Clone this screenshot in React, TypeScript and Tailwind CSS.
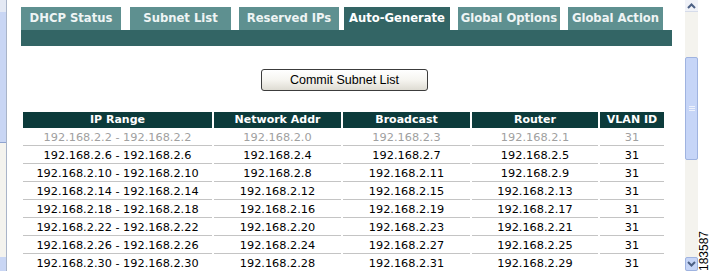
const tabs = [
  { label: "DHCP Status", w: "w-[100px]", mr: "mr-[9px]" },
  { label: "Subnet List", w: "w-[101px]", mr: "mr-[8px]" },
  { label: "Reserved IPs", w: "w-[100px]", mr: "mr-[5px]" },
  { label: "Auto-Generate", w: "w-[106px]", mr: "mr-[8px]", active: true },
  { label: "Global Options", w: "w-[102px]", mr: "mr-[8px]" },
  { label: "Global Action", w: "w-[95px]", mr: "" },
];

const rows = [
  ["192.168.2.2 - 192.168.2.2", "192.168.2.0", "192.168.2.3", "192.168.2.1", "31"],
  ["192.168.2.6 - 192.168.2.6", "192.168.2.4", "192.168.2.7", "192.168.2.5", "31"],
  ["192.168.2.10 - 192.168.2.10", "192.168.2.8", "192.168.2.11", "192.168.2.9", "31"],
  ["192.168.2.14 - 192.168.2.14", "192.168.2.12", "192.168.2.15", "192.168.2.13", "31"],
  ["192.168.2.18 - 192.168.2.18", "192.168.2.16", "192.168.2.19", "192.168.2.17", "31"],
  ["192.168.2.22 - 192.168.2.22", "192.168.2.20", "192.168.2.23", "192.168.2.21", "31"],
  ["192.168.2.26 - 192.168.2.26", "192.168.2.24", "192.168.2.27", "192.168.2.25", "31"],
  ["192.168.2.30 - 192.168.2.30", "192.168.2.28", "192.168.2.31", "192.168.2.29", "31"],
];

const headers = [
  { label: "IP Range", w: "w-[189px]" },
  { label: "Network Addr", w: "w-[127px]" },
  { label: "Broadcast", w: "w-[127px]" },
  { label: "Router", w: "w-[126px]" },
  { label: "VLAN ID", w: "w-[64px]" },
];

function Chevron({ up }: { up?: boolean }) {
  return (
    <svg width="9" height="6" viewBox="0 0 9 6">
      <path
        d={up ? "M1 5 L4.5 1.5 L8 5" : "M1 1 L4.5 4.5 L8 1"}
        fill="none"
        stroke="#4d6185"
        strokeWidth="2"
      />
    </svg>
  );
}

export default function App() {
  return (
    <div className="relative flex h-[271px] w-[711px] overflow-hidden bg-white font-['DejaVu_Sans',sans-serif]">
      {/* left frame scrollbar edge */}
      <div className="flex w-[7px] flex-col border-r border-[#a9b4c8]">
        <div className="h-[12px] bg-[#e4e9f4]" />
        <div className="h-[131px] border-b border-[#8fa3cf] bg-[#c9d6f4]" />
        <div className="flex-1 bg-[#f4f3ee]" />
        <div className="h-[14px] bg-[#c9d6f4]" />
      </div>

      {/* main content */}
      <div className="w-[678px] pl-[14px] pt-[7px]">
        <div className="flex h-[23px] w-[651px] items-stretch">
          {tabs.map((t) => (
            <div
              key={t.label}
              className={`${t.w} ${t.mr} flex items-center justify-center text-[11.6px] font-bold ${
                t.active ? "bg-[#336565] text-white" : "bg-[#5e9090] text-[#eef4f4]"
              }`}
            >
              {t.label}
            </div>
          ))}
        </div>
        <div className="h-[16px] w-[651px] bg-[#336565]" />

        <div className="pt-[21px]">
          <button className="ml-[240px] h-[22px] w-[167px] rounded-[3px] border border-[#3c3c3c] bg-gradient-to-b from-white via-[#f6f5f0] to-[#dedcd3] font-['Liberation_Sans',Arial,sans-serif] text-[12.5px] text-black">
            Commit Subnet List
          </button>
        </div>

        <table className="mt-[21px] border-separate border-spacing-x-[2px] border-spacing-y-0 text-[11.3px]">
          <thead>
            <tr className="h-[16px]">
              {headers.map((h) => (
                <th
                  key={h.label}
                  className={`${h.w} bg-[#0c3b3b] p-0 text-center text-[11px] font-bold leading-[16px] text-white`}
                >
                  {h.label}
                </th>
              ))}
            </tr>
          </thead>
          <tbody>
            {rows.map((r, i) => (
              <tr key={i} className="h-[18px]">
                {r.map((c, j) => (
                  <td
                    key={j}
                    className={`h-[18px] border-b border-[#c4c4c4] px-0 pb-0 pt-[3px] text-center align-top leading-[14px] ${
                      i === 0 ? "text-[#a0a0a0]" : "text-black"
                    }`}
                  >
                    {c}
                  </td>
                ))}
              </tr>
            ))}
          </tbody>
        </table>
      </div>

      {/* right scrollbar */}
      <div className="flex w-[13px] flex-col bg-[#f4f3ee]">
        <div className="flex h-[12px] items-center justify-center border-b border-[#d6dcea] bg-[#f0f2f8]">
          <Chevron up />
        </div>
        <div className="h-[45px]" />
        <div className="flex h-[103px] flex-col items-center justify-center rounded-[2px] border border-[#9fb3e0] bg-[#c6d5f7]">
          <div className="h-px w-[6px] bg-[#eef2fc]" />
          <div className="mt-[1px] h-px w-[6px] bg-[#eef2fc]" />
          <div className="mt-[1px] h-px w-[6px] bg-[#eef2fc]" />
        </div>
        <div className="flex-1" />
        <div className="flex h-[14px] items-center justify-center rounded-[2px] border border-[#9fb3e0] bg-[#c6d5f7]">
          <Chevron />
        </div>
      </div>

      {/* figure number */}
      <div className="absolute bottom-0 right-0 flex h-[42px] w-[13px] items-end justify-center">
        <span className="block origin-center -rotate-90 translate-y-[-14px] whitespace-nowrap font-['Liberation_Sans',Arial,sans-serif] text-[12px] leading-[12px] text-black">
          183587
        </span>
      </div>
    </div>
  );
}
